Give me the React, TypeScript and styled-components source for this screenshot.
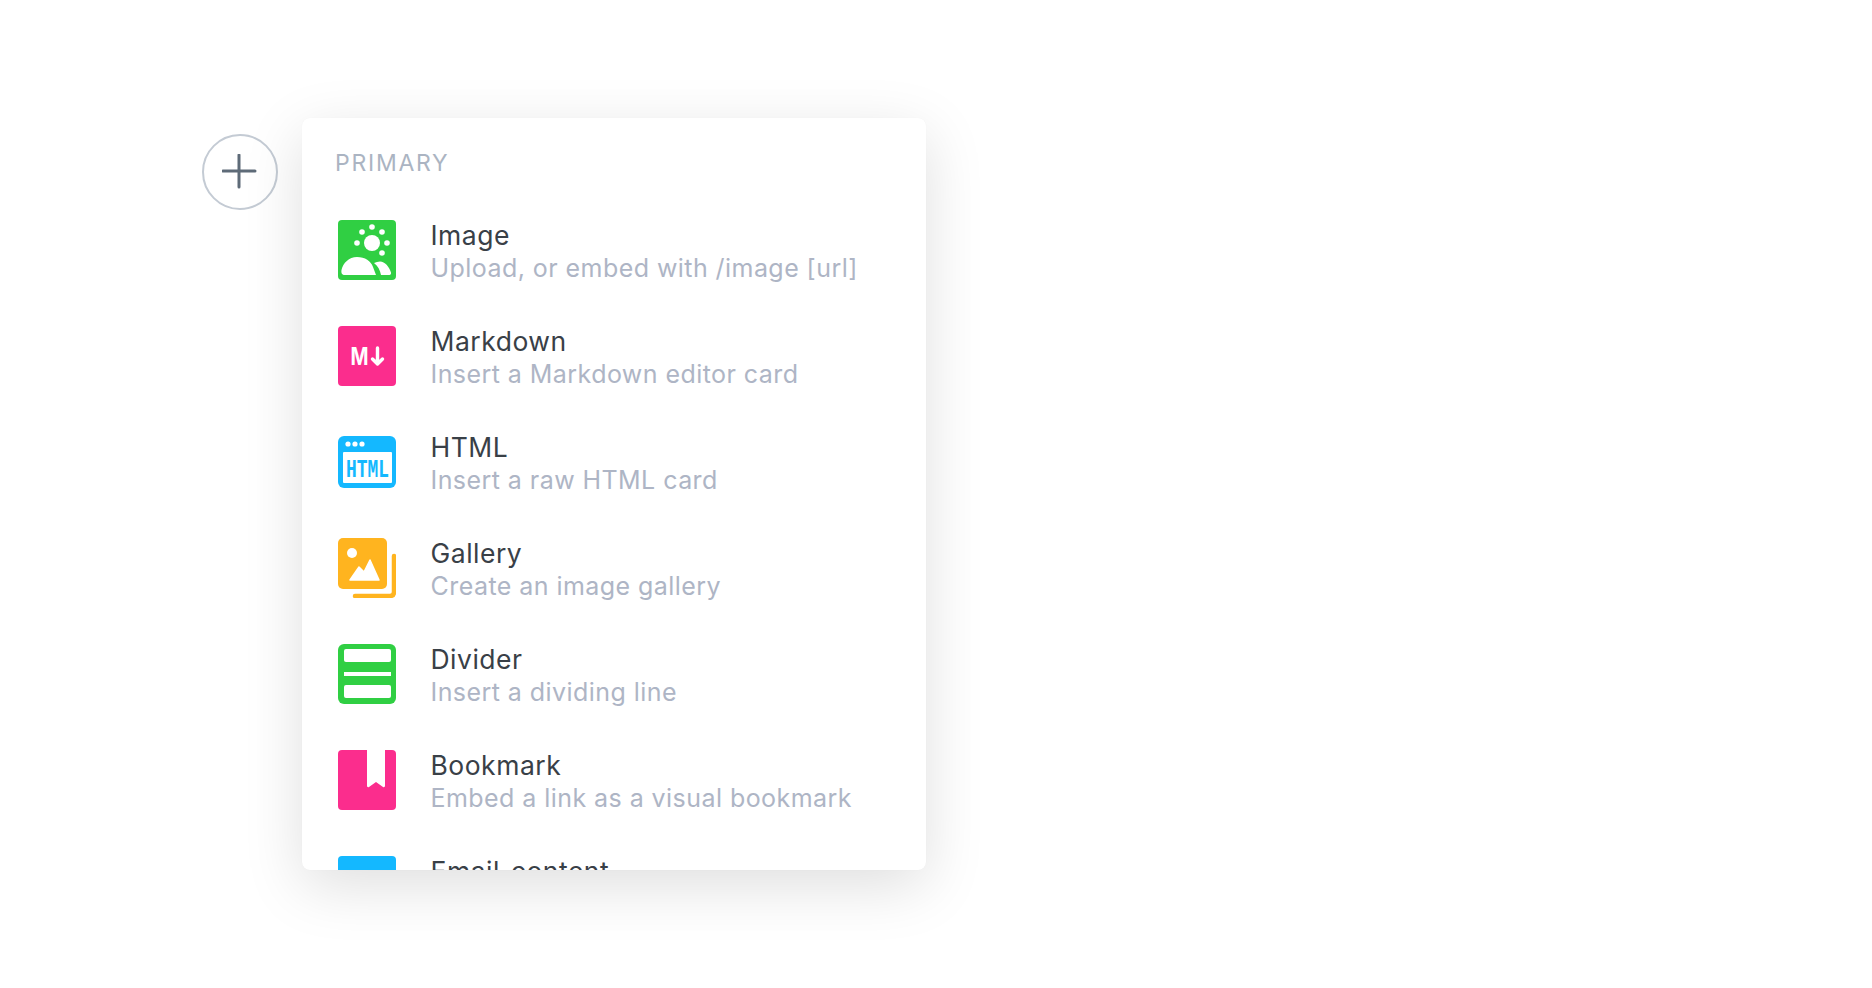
import React from 'react';
import styled, { createGlobalStyle } from 'styled-components';

const GREEN = '#30cf43';
const PINK = '#fb2d8d';
const BLUE = '#14b8ff';
const YELLOW = '#ffb41f';

const GlobalStyle = createGlobalStyle`
  html, body {
    margin: 0;
    background: #fff;
    font-family: Inter, "Liberation Sans", sans-serif;
  }
`;

const Page = styled.div`
  display: flex;
  align-items: flex-start;
  gap: 24px;
  height: 988px;
  box-sizing: border-box;
  padding: 118px 0 0 202px;
  overflow: hidden;
`;

const PlusButton = styled.div`
  display: flex;
  align-items: center;
  justify-content: center;
  width: 76px;
  height: 76px;
  margin-top: 16px;
  box-sizing: border-box;
  border: 2px solid #c4cbd4;
  border-radius: 50%;
  background: #fff;
`;

const Menu = styled.div`
  width: 624px;
  height: 752px;
  overflow: hidden;
  background: #fff;
  border-radius: 8px;
  box-shadow: 0 0 1px rgba(0, 0, 0, 0.05), 0 16px 60px rgba(0, 0, 0, 0.13);
`;

const Heading = styled.div`
  height: 79px;
  padding: 31px 0 0 33px;
  box-sizing: border-box;
  font-size: 23px;
  line-height: 28px;
  letter-spacing: 1.75px;
  color: #abb4c2;
`;

const Row = styled.div`
  display: flex;
  align-items: center;
  flex-shrink: 0;
  gap: 34.5px;
  height: 106px;
  padding-left: 36px;
`;

const Icon = styled.svg`
  display: block;
  flex-shrink: 0;
  width: 58px;
  height: 60px;
`;

const Label = styled.div`
  display: flex;
  flex-direction: column;
  padding-top: 2px;
`;

const Title = styled.div`
  font-size: 26.5px;
  line-height: 32px;
  letter-spacing: 0.5px;
  word-spacing: 3px;
  color: #394047;
`;

const Description = styled.div`
  margin-top: 1px;
  font-size: 25px;
  line-height: 32px;
  letter-spacing: 0.44px;
  color: #aeb5c5;
`;

const ImageIcon = () => (
  <Icon viewBox="0 0 58 60">
    <rect width="58" height="60" rx="4" fill={GREEN} />
    <g fill="#fff">
      <circle cx="34" cy="23" r="8" />
      <circle cx="34" cy="7" r="2.800" />
      <circle cx="24" cy="12" r="2.800" />
      <circle cx="44" cy="12" r="2.800" />
      <circle cx="19" cy="23" r="2.800" />
      <circle cx="49" cy="23" r="2.800" />
      <circle cx="44" cy="33" r="2.800" />
      <path d="M7 55c-3 0-4-2-3.500-5C5 43 11 37 19 37c8 0 14 4 16 10l3 8z" />
      <path d="M36 43c2-1 4-1.500 6-1.500 5 0 9 5 11 11 .3 1.500-.5 2.500-1.500 2.500H43c-1-5-3-9-7-12z" />
    </g>
  </Icon>
);

const MarkdownIcon = () => (
  <Icon viewBox="0 0 58 60">
    <rect width="58" height="60" rx="4" fill={PINK} />
    <text
      x="12.500"
      y="39"
      textLength="18"
      lengthAdjust="spacingAndGlyphs"
      fontFamily="Inter, sans-serif"
      fontWeight="700"
      fontSize="24.500"
      fill="#fff"
    >
      M
    </text>
    <path d="M39.500 22v16M34.500 33l5 5 5-5" fill="none" stroke="#fff" strokeWidth="3.400" strokeLinecap="round" strokeLinejoin="round" />
  </Icon>
);

const HtmlIcon = () => (
  <Icon viewBox="0 0 58 60">
    <rect y="4" width="58" height="52" rx="6" fill={BLUE} />
    <rect x="5" y="20" width="49" height="31" rx="1" fill="#fff" />
    <g fill="#fff">
      <circle cx="10" cy="12" r="2.600" />
      <circle cx="17" cy="12" r="2.600" />
      <circle cx="24" cy="12" r="2.600" />
    </g>
    <text
      transform="translate(8 45) scale(.853 1.24)"
      fontFamily="Liberation Mono, monospace"
      fontWeight="700"
      fontSize="21"
      fill={BLUE}
    >
      HTML
    </text>
  </Icon>
);

const GalleryIcon = () => (
  <Icon viewBox="0 0 58 60">
    <rect width="49" height="51" rx="5" fill={YELLOW} />
    <path d="M56 18v36c0 2-1 4-4 4H17" fill="none" stroke={YELLOW} strokeWidth="4.500" strokeLinecap="round" />
    <circle cx="14" cy="15" r="5" fill="#fff" />
    <path
      d="M12 42l9-13 5 5 6-12 9 20z"
      fill="#fff"
      stroke="#fff"
      strokeWidth="1.500"
      strokeLinejoin="round"
    />
  </Icon>
);

const DividerIcon = () => (
  <Icon viewBox="0 0 58 60">
    <rect width="58" height="60" rx="6" fill={GREEN} />
    <g fill="#fff">
      <rect x="6" y="5" width="47" height="13" rx="2" />
      <rect x="6" y="28" width="47" height="4" />
      <rect x="6" y="41" width="47" height="13" rx="2" />
    </g>
  </Icon>
);

const BookmarkIcon = () => (
  <Icon viewBox="0 0 58 60">
    <rect width="58" height="60" rx="4" fill={PINK} />
    <path d="M29 0h18v36c0 1-1 1.500-2 1l-7-5-7 5c-1 .5-2 0-2-1z" fill="#fff" />
  </Icon>
);

const EmailIcon = () => (
  <Icon viewBox="0 0 58 60">
    <rect width="58" height="60" rx="4" fill={BLUE} />
  </Icon>
);

const items = [
  { title: 'Image', description: 'Upload, or embed with /image [url]', icon: <ImageIcon /> },
  { title: 'Markdown', description: 'Insert a Markdown editor card', icon: <MarkdownIcon /> },
  { title: 'HTML', description: 'Insert a raw HTML card', icon: <HtmlIcon /> },
  { title: 'Gallery', description: 'Create an image gallery', icon: <GalleryIcon /> },
  { title: 'Divider', description: 'Insert a dividing line', icon: <DividerIcon /> },
  { title: 'Bookmark', description: 'Embed a link as a visual bookmark', icon: <BookmarkIcon /> },
  { title: 'Email content', description: 'Only visible when delivered by email', icon: <EmailIcon /> },
];

const App: React.FC = () => (
  <>
    <GlobalStyle />
    <Page>
      <PlusButton>
        <svg width="36" height="36" viewBox="0 0 36 36">
          <path d="M17 1v32M1 17h32" stroke="#5e6b78" strokeWidth="3" strokeLinecap="round" />
        </svg>
      </PlusButton>
      <Menu>
        <Heading>PRIMARY</Heading>
        {items.map((item) => (
          <Row key={item.title}>
            {item.icon}
            <Label>
              <Title>{item.title}</Title>
              <Description>{item.description}</Description>
            </Label>
          </Row>
        ))}
      </Menu>
    </Page>
  </>
);

export default App;
